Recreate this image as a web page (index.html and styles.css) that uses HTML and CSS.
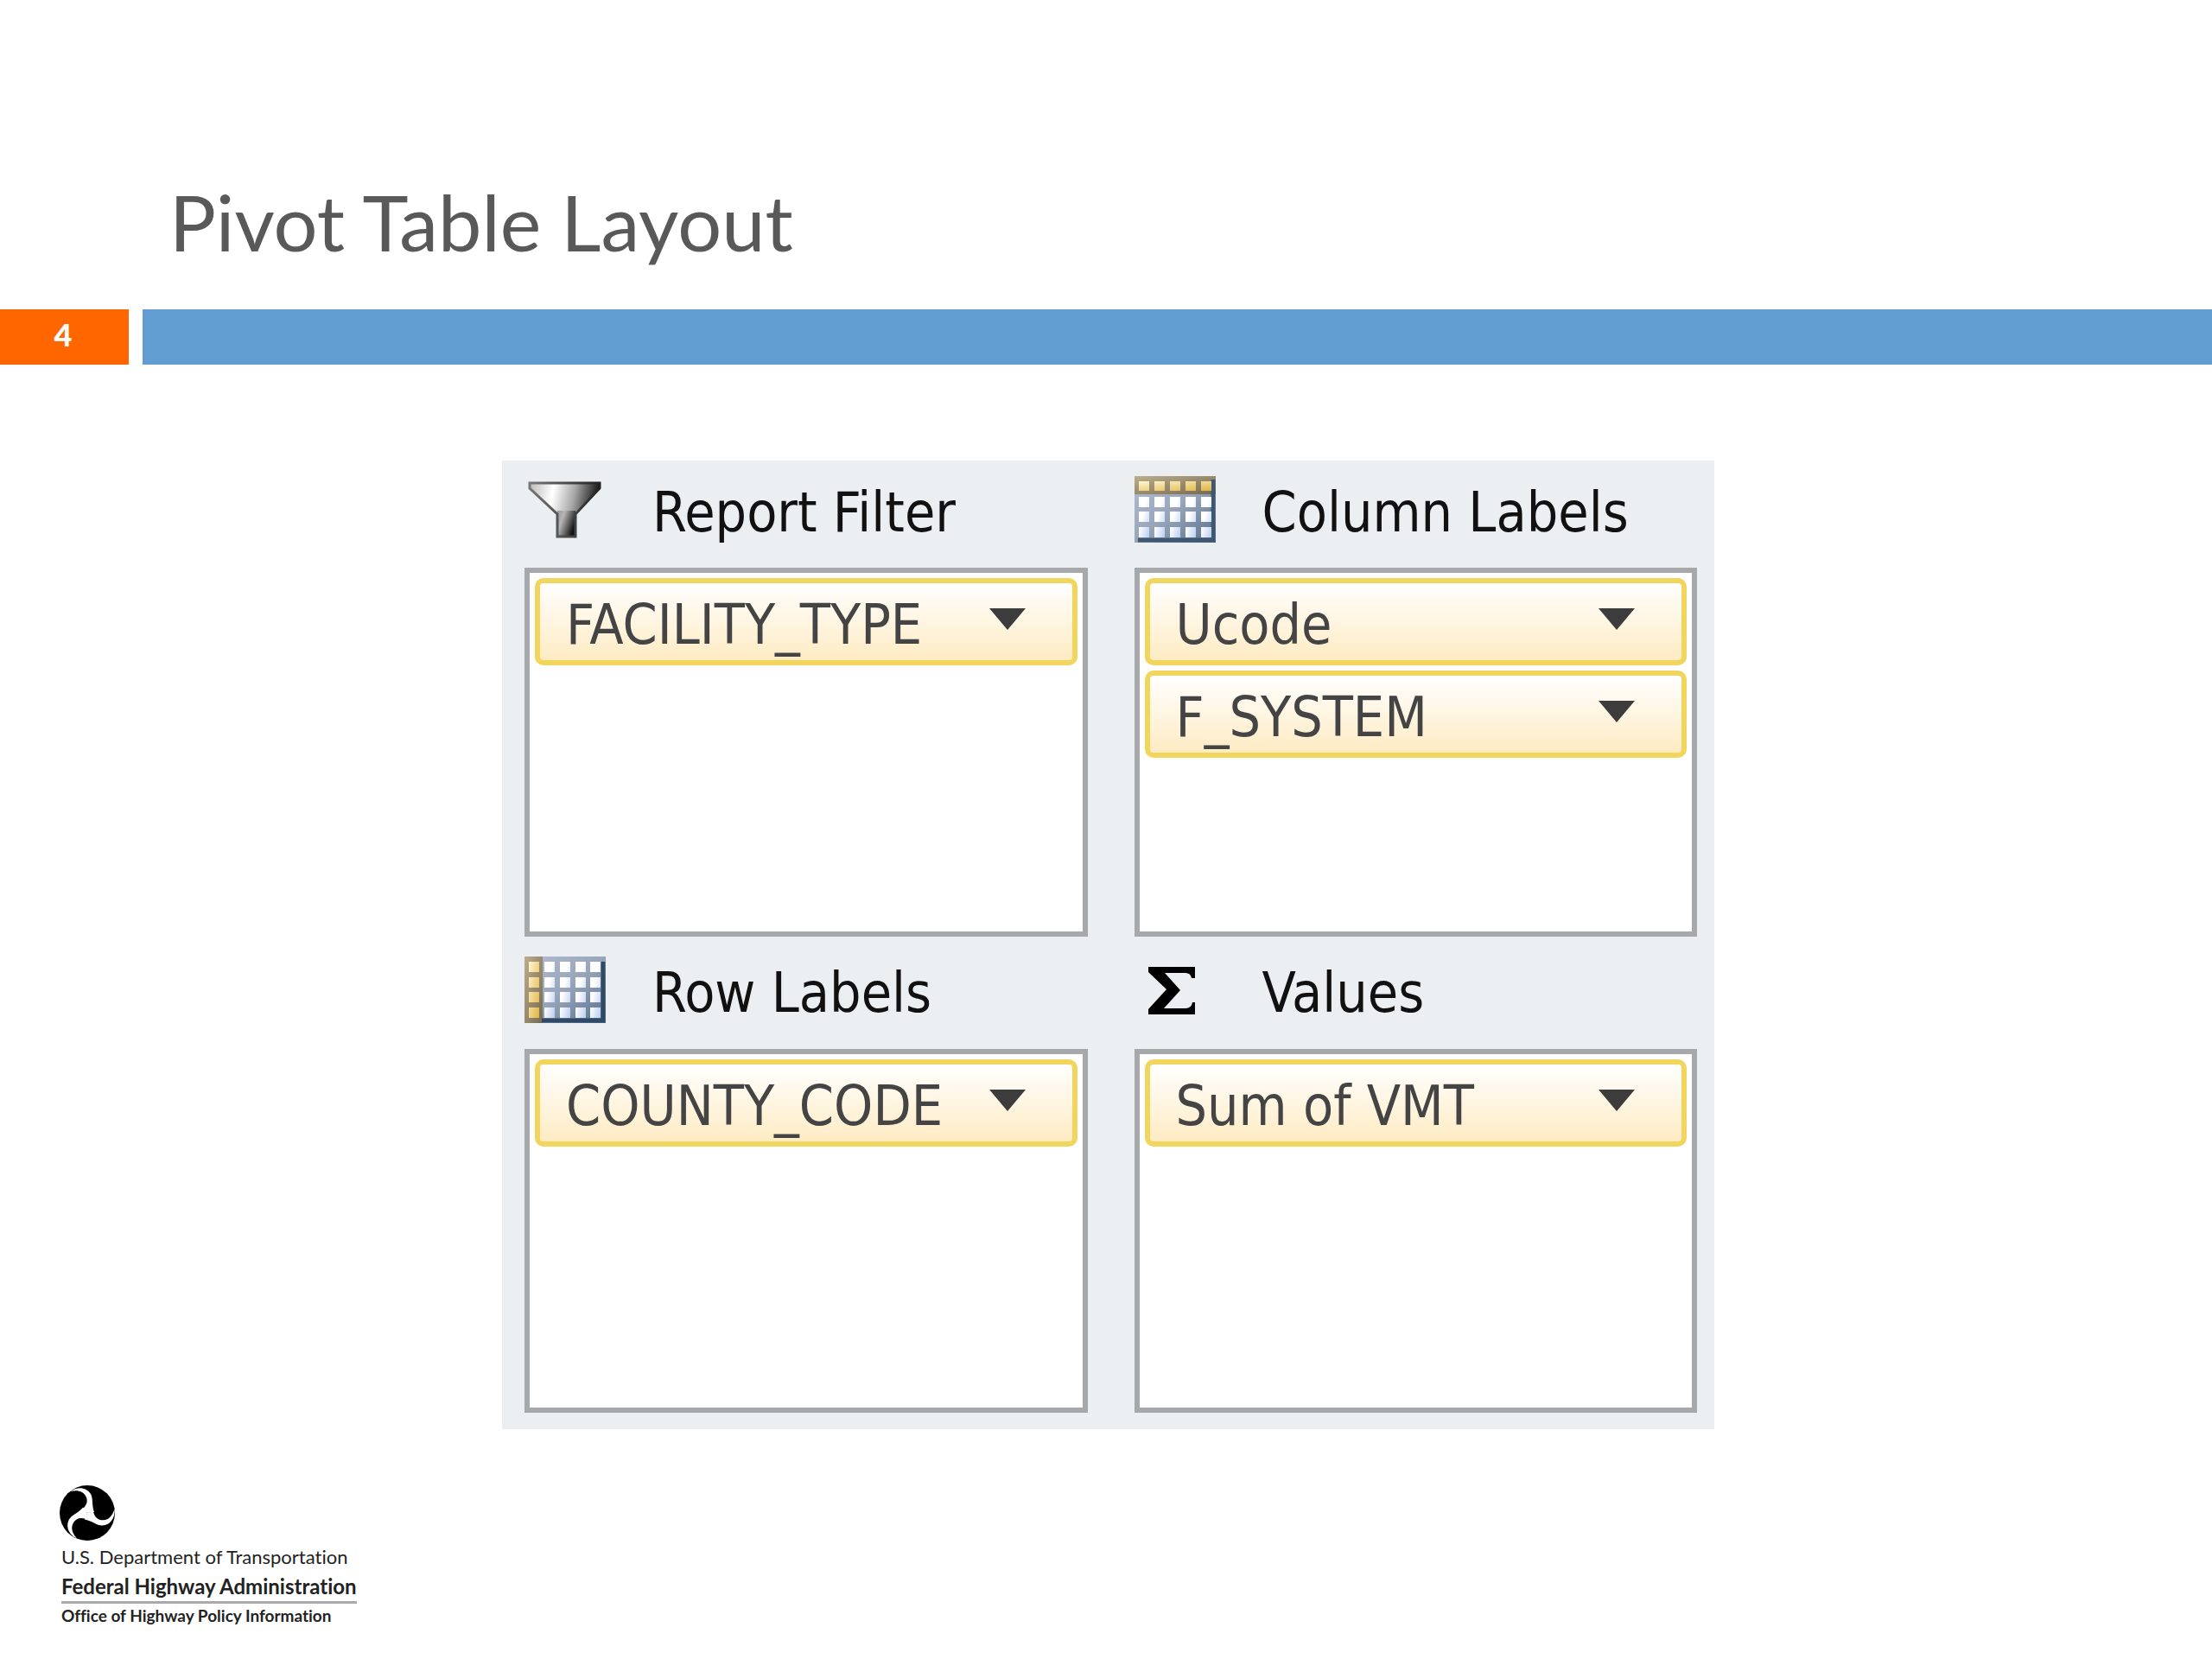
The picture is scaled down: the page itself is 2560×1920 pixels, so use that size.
FILE: index.html
```
<!DOCTYPE html>
<html lang="en">
<head>
    <meta charset="UTF-8">
    <meta name="viewport" content="width=device-width, initial-scale=1.0">
    <title>Pivot Table Layout</title>
    <link rel="stylesheet" href="styles.css">
</head>
<body>
    <header class="slide-header">
        <h1>Pivot Table Layout</h1>
    </header>

    <div class="band">
        <div class="page-number">4</div>
        <div class="band-line"></div>
    </div>

    <main class="content">
        <div class="pivot">
            <section class="area">
                <div class="area-title">
                    <svg class="icon" viewBox="0 0 96 90" aria-hidden="true">
                        <defs>
                            <linearGradient id="funnel" x1="0" x2="1" y1="0" y2="0.15">
                                <stop offset="0" stop-color="#bbb"/>
                                <stop offset="0.35" stop-color="#fff"/>
                                <stop offset="0.65" stop-color="#a8a8a8"/>
                                <stop offset="1" stop-color="#111"/>
                            </linearGradient>
                            <linearGradient id="stem" x1="0" x2="1" y1="0" y2="0.5">
                                <stop offset="0" stop-color="#999"/>
                                <stop offset="0.35" stop-color="#b5b5b5"/>
                                <stop offset="1" stop-color="#111"/>
                            </linearGradient>
                            <linearGradient id="outline" x1="0" x2="1" y1="0" y2="0">
                                <stop offset="0" stop-color="#777"/>
                                <stop offset="1" stop-color="#222"/>
                            </linearGradient>
                            <!-- grid icons -->
                            <linearGradient id="frame" x1="0" x2="1" y1="0" y2="1">
                                <stop offset="0" stop-color="#b4bcd4"/>
                                <stop offset="0.5" stop-color="#98a5b8"/>
                                <stop offset="1" stop-color="#56708c"/>
                            </linearGradient>
                            <linearGradient id="gold" x1="0" x2="1" y1="0" y2="1">
                                <stop offset="0" stop-color="#bcae8c"/>
                                <stop offset="1" stop-color="#75694f"/>
                            </linearGradient>
                            <linearGradient id="gold-cell" x1="0" x2="1" y1="0" y2="1">
                                <stop offset="0" stop-color="#fff6d0"/>
                                <stop offset="1" stop-color="#dfb447"/>
                            </linearGradient>
                            <linearGradient id="white-cell" x1="0" x2="1" y1="0" y2="1">
                                <stop offset="0.4" stop-color="#fff"/>
                                <stop offset="1" stop-color="#bccdf2"/>
                            </linearGradient>
                        </defs>
                        <path d="M6 14h81v6L60 49v27H37V49L6 20z" fill="url(#funnel)"/>
                        <path d="M38 46h21v30H38z" fill="url(#stem)"/>
                        <path d="M6 14h81v6L59 50v26H38V50L6 20z" fill="none" stroke="url(#outline)" stroke-width="3"/>
                    </svg>
                    <h2>Report Filter</h2>
                </div>
                <ul class="fields">
                    <li><button type="button" class="field">FACILITY_TYPE<span class="arrow"></span></button></li>
                </ul>
            </section>

            <section class="area">
                <div class="area-title">
                    <svg class="icon" viewBox="0 0 96 90" aria-hidden="true">
                        <path d="M0 6h94v77H0z" fill="url(#frame)"/>
                        <path d="M0 6h94v21H0z" fill="url(#gold)"/>
                        <path d="M91 10v70H4" fill="none" stroke="#3f5871" stroke-width="5"/>
                        <path d="M5 12h12v11H5zm18 0h12v11H23zm18 0h12v11H41zm18 0h12v11H59zm18 0h12v11H77z" fill="url(#gold-cell)"/>
                        <g fill="url(#white-cell)">
                            <path d="M5 30h12v12H5zm0 17h12v12H5zm0 18h12v12H5z"/>
                            <path d="M23 30h12v12H23zm0 17h12v12H23zm0 18h12v12H23z"/>
                            <path d="M41 30h12v12H41zm0 17h12v12H41zm0 18h12v12H41z"/>
                            <path d="M59 30h12v12H59zm0 17h12v12H59zm0 18h12v12H59z"/>
                            <path d="M77 30h12v12H77zm0 17h12v12H77zm0 18h12v12H77z"/>
                        </g>
                    </svg>
                    <h2>Column Labels</h2>
                </div>
                <ul class="fields">
                    <li><button type="button" class="field">Ucode<span class="arrow"></span></button></li>
                    <li><button type="button" class="field">F_SYSTEM<span class="arrow"></span></button></li>
                </ul>
            </section>

            <section class="area">
                <div class="area-title">
                    <svg class="icon" viewBox="0 0 96 90" aria-hidden="true">
                        <path d="M0 6h94v77H0z" fill="url(#frame)"/>
                        <path d="M0 6h21v77H0z" fill="url(#gold)"/>
                        <path d="M91 12v68H20" fill="none" stroke="#2f4a66" stroke-width="5"/>
                        <path d="M5 12h12v12H5zm0 18h12v12H5zm0 17h12v12H5zm0 18h12v12H5z" fill="url(#gold-cell)"/>
                        <g fill="url(#white-cell)">
                            <path d="M23 12h12v12H23zm0 18h12v12H23zm0 17h12v12H23zm0 18h12v12H23z"/>
                            <path d="M41 12h12v12H41zm0 18h12v12H41zm0 17h12v12H41zm0 18h12v12H41z"/>
                            <path d="M59 12h12v12H59zm0 18h12v12H59zm0 17h12v12H59zm0 18h12v12H59z"/>
                            <path d="M76 12h12v12H76zm0 18h12v12H76zm0 17h12v12H76zm0 18h12v12H76z"/>
                        </g>
                    </svg>
                    <h2>Row Labels</h2>
                </div>
                <ul class="fields">
                    <li><button type="button" class="field">COUNTY_CODE<span class="arrow"></span></button></li>
                </ul>
            </section>

            <section class="area">
                <div class="area-title">
                    <svg class="icon" viewBox="0 0 96 90" aria-hidden="true">
                        <path d="M16 18h54v13h-4q-1-6-7-6H35l18 20-19 21h25q7 0 8-7h3v14H16v-6l21-23-21-20z"/>
                    </svg>
                    <h2>Values</h2>
                </div>
                <ul class="fields">
                    <li><button type="button" class="field">Sum of VMT<span class="arrow"></span></button></li>
                </ul>
            </section>
        </div>
    </main>

    <footer class="agency">
        <svg class="seal" viewBox="0 0 66 66" aria-hidden="true">
            <circle cx="33" cy="32" r="32"/>
            <g fill="#fff">
                <path id="blade" d="M33 32L28 27C33 22 34 17 31 12C28 7 22 5 13 7C22 1 32 2 37 10C40 15 38 23 41 31z"/>
                <use href="#blade" transform="rotate(120 33 32)"/>
                <use href="#blade" transform="rotate(240 33 32)"/>
            </g>
        </svg>
        <p class="department">U.S. Department of Transportation</p>
        <p class="administration">Federal Highway Administration</p>
        <p class="office">Office of Highway Policy Information</p>
    </footer>
</body>
</html>
```
FILE: styles.css
```
* {
    box-sizing: border-box;
}

body {
    margin: 0;
    min-height: 100vh;
    display: flex;
    flex-direction: column;
    background-color: #fff;
    font-family: "DejaVu Sans Condensed", "DejaVu Sans", sans-serif;
}

h1, h2, p, ul {
    margin: 0;
    padding: 0;
    font-weight: normal;
}

.slide-header {
    padding: 204px 196px 50px;
}

h1 {
    font-family: Lato, sans-serif;
    font-size: 90px;
    line-height: 104px;
    color: #595959;
}

.band {
    display: flex;
    gap: 16px;
    height: 64px;
}

.page-number {
    width: 149px;
    padding-right: 3px;
    background-color: #ff6600;
    color: #fff;
    font-family: Lato, sans-serif;
    font-size: 36px;
    font-weight: 900;
    line-height: 58px;
    text-align: center;
}

.band-line {
    flex: 1;
    background-color: #619dd1;
}

.content {
    flex: 1;
    padding: 111px 576px 0 581px;
}

.pivot {
    display: grid;
    grid-template-columns: 1fr 1fr;
    column-gap: 54px;
    padding: 0 20px 19px 26px;
    background-color: #ebeff2;
}

.area {
    display: flex;
    flex-direction: column;
}

.area-title {
    display: flex;
    align-items: center;
    gap: 52px;
    height: 124px;
    padding-bottom: 10px;
}

.area:nth-child(n + 3) .area-title {
    height: 130px;
    padding-bottom: 6px;
}

.icon {
    width: 96px;
    height: 90px;
}

h2 {
    padding-top: 6px;
    font-size: 64px;
    line-height: 76px;
    color: #111;
}

.fields {
    display: flex;
    flex-direction: column;
    gap: 6px;
    height: 427px;
    padding: 6px;
    border: 6px solid #a5a9ac;
    background-color: #fff;
    list-style: none;
}

.area:nth-child(n + 3) .fields {
    height: 421px;
}

.field {
    display: flex;
    align-items: center;
    justify-content: space-between;
    width: 100%;
    height: 101px;
    padding: 6px 54px 0 30px;
    border: 6px solid #f1d55c;
    border-radius: 10px;
    background: linear-gradient(#fff, #feebc3);
    font-family: inherit;
    font-size: 64px;
    color: #444;
    cursor: pointer;
}

.arrow {
    margin-bottom: 12px;
    border: 21px solid transparent;
    border-top: 25px solid #3c3c3c;
    border-bottom: 0;
}

.agency {
    align-self: flex-start;
    padding: 0 68px 36px;
    color: #222;
    font-family: Lato, sans-serif;
    font-variant-ligatures: none;
}

.agency p {
    margin-left: 3px;
}

.seal {
    display: block;
    width: 66px;
    height: 66px;
}

.department {
    font-size: 22px;
    line-height: 34px;
}

.administration {
    border-bottom: 3px solid #aaa;
    font-size: 24px;
    font-weight: bold;
    line-height: 34px;
}

.office {
    font-size: 19px;
    font-weight: bold;
    line-height: 28px;
}
```
